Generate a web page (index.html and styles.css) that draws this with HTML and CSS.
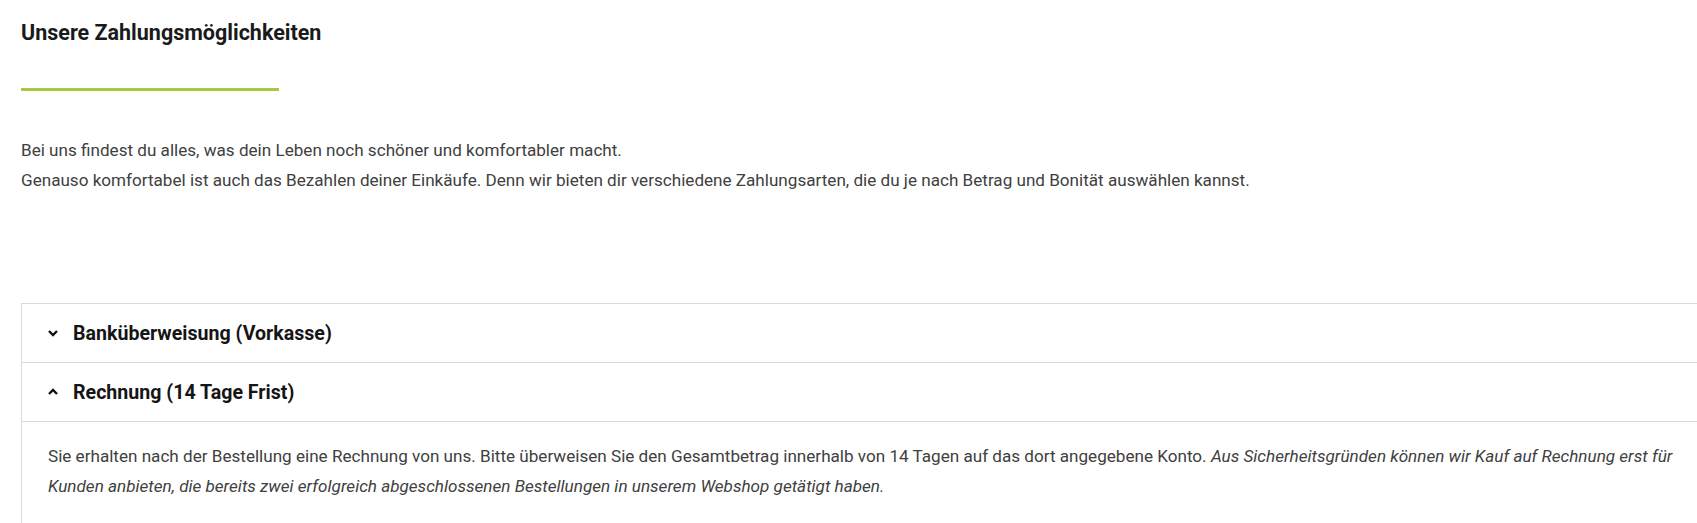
FILE: index.html
```html
<!DOCTYPE html>
<html lang="de">

<head>
    <meta charset="UTF-8">
    <meta name="viewport" content="width=device-width, initial-scale=1.0">
    <title>Zahlungsmöglichkeiten</title>
    <link rel="stylesheet" href="styles.css">
</head>

<body>
    <div class="page">
        <h2>Unsere Zahlungsmöglichkeiten</h2>
        <div class="divider"></div>

        <div class="intro">
            <p>Bei uns findest du alles, was dein Leben noch schöner und komfortabler macht.</p>
            <p>Genauso komfortabel ist auch das Bezahlen deiner Einkäufe. Denn wir bieten dir verschiedene Zahlungsarten, die du je nach Betrag und Bonität auswählen kannst.</p>
        </div>

        <div class="accordion">
            <div class="accordion-item">
                <div class="accordion-header">
                    <svg class="chevron" width="12" height="10" viewBox="0 0 12 10">
                        <polyline points="2,3 6,7 10,3" fill="none" stroke="#111" stroke-width="2.4" />
                    </svg>
                    <span>Banküberweisung (Vorkasse)</span>
                </div>
            </div>
            <div class="accordion-item open">
                <div class="accordion-header">
                    <svg class="chevron" width="12" height="10" viewBox="0 0 12 10">
                        <polyline points="2,7 6,3 10,7" fill="none" stroke="#111" stroke-width="2.4" />
                    </svg>
                    <span>Rechnung (14 Tage Frist)</span>
                </div>
                <div class="accordion-body">
                    Sie erhalten nach der Bestellung eine Rechnung von uns. Bitte überweisen Sie den Gesamtbetrag innerhalb von 14 Tagen auf das dort angegebene Konto.
                    <em>Aus Sicherheitsgründen können wir Kauf auf Rechnung erst für Kunden anbieten, die bereits zwei erfolgreich abgeschlossenen Bestellungen in unserem Webshop getätigt haben.</em>
                </div>
            </div>
        </div>
    </div>
</body>

</html>
```

FILE: styles.css
```css
html,
body {
    overflow: hidden;
}

body {
    font-family: Roboto, "Liberation Sans", sans-serif;
    margin: 0;
    padding: 0;
    background-color: #fff;
    color: #404040;
}

.page {
    width: 1720px;
    padding-left: 21px;
}

h2 {
    margin: 0;
    padding-top: 20px;
    font-size: 21.5px;
    line-height: 26px;
    font-weight: 700;
    color: #1a1a1a;
}

.divider {
    width: 258px;
    height: 3px;
    margin-top: 42px;
    background-color: #a6c93f;
}

.intro {
    margin-top: 44px;
    font-size: 17.1px;
    line-height: 30px;
}

.intro p {
    margin: 0;
}

.accordion {
    margin-top: 108px;
    border: 1px solid #d9d9d9;
    border-bottom: none;
}

.accordion-item + .accordion-item {
    border-top: 1px solid #d9d9d9;
}

.accordion-header {
    display: flex;
    align-items: center;
    gap: 14px;
    height: 58px;
    padding-left: 25px;
    font-size: 19.6px;
    font-weight: 700;
    color: #151515;
    cursor: pointer;
}

.accordion-body {
    border-top: 1px solid #d9d9d9;
    padding: 19px 26px 40px;
    font-size: 17.1px;
    line-height: 30px;
}
```
